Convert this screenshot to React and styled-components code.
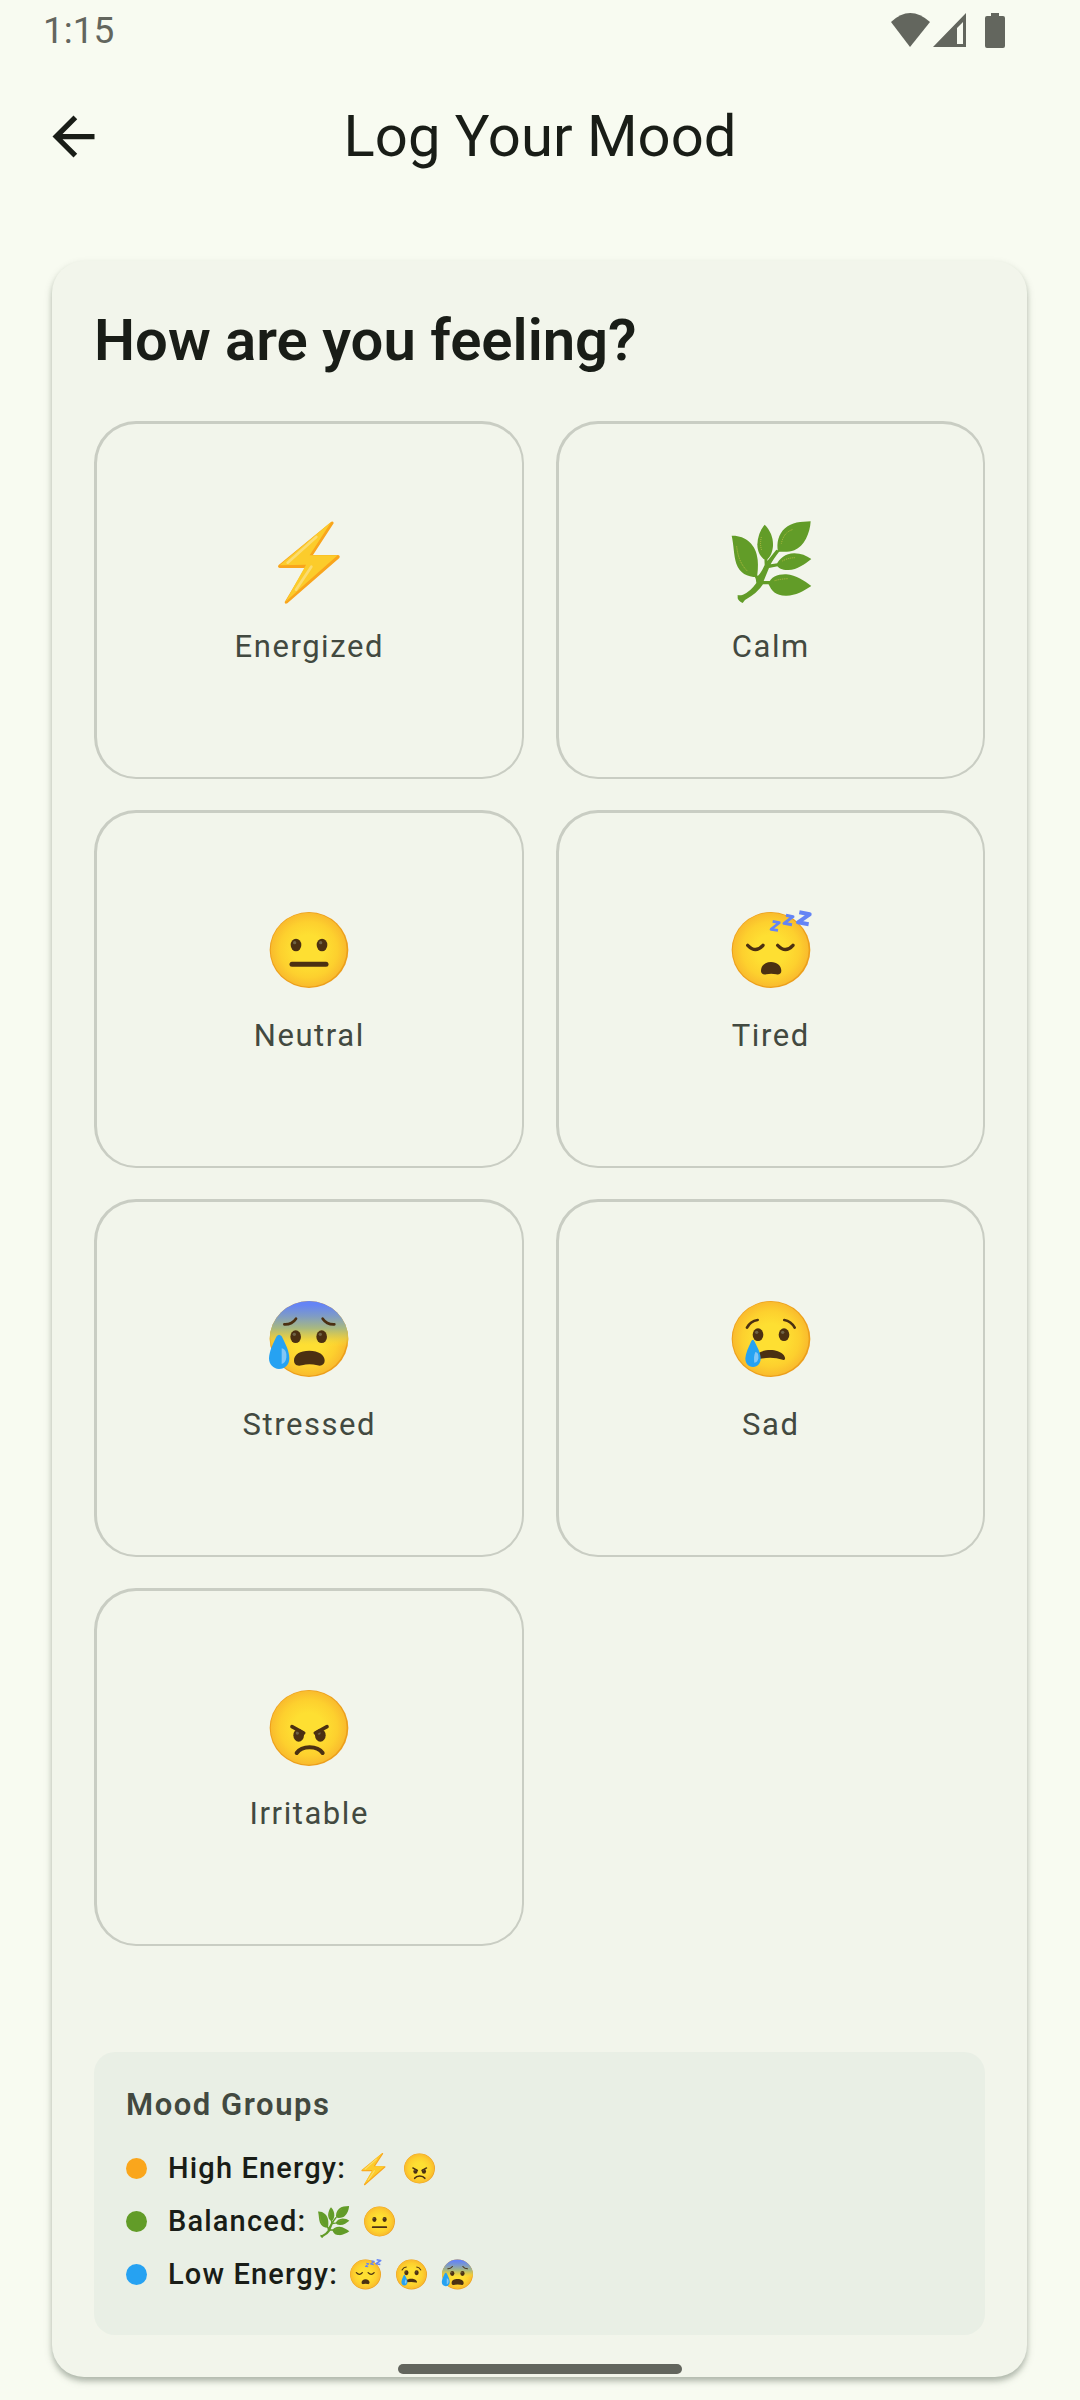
import React, { useState, useId } from 'react'
import styled, { createGlobalStyle } from 'styled-components'

const GlobalStyle = createGlobalStyle`
    * {
        box-sizing: border-box;
    }

    body {
        margin: 0;
        background: #f8fbf1;
        color: #191d17;
        font-family: Roboto, 'Liberation Sans', sans-serif;
    }
`

const BROWN = '#4b3012'

// round yellow head shared by all the faces
const Head = ({ cx, id, scared }) => (
    <>
        <defs>
            <radialGradient id={`${id}-head`} cx='50%' cy='50%' r='50%'>
                <stop offset='0.4' stopColor='#fedf32' />
                <stop offset='0.75' stopColor='#fdd02e' />
                <stop offset='1' stopColor='#f9bb2d' />
            </radialGradient>
            <linearGradient id={`${id}-blue`} x1='0' y1='0' x2='0' y2='1'>
                <stop offset='0.05' stopColor='#6584f5' />
                <stop offset='0.2' stopColor='#7f9cc4' />
                <stop offset='0.36' stopColor='#a9b97f' />
                <stop offset='0.48' stopColor='#dccb4e' stopOpacity='0.8' />
                <stop offset='0.6' stopColor='#fedf32' stopOpacity='0' />
            </linearGradient>
        </defs>
        <ellipse cx={cx} cy='204' rx='118' ry='114' fill='#ec9f1b' />
        <ellipse cx={cx - 1} cy='203' rx='114' ry='111' fill={`url(#${id}-head)`} />
        {scared && <ellipse cx={cx} cy='204' rx='118' ry='114' fill={`url(#${id}-blue)`} />}
    </>
)

const Eye = ({ cx, cy }) => (
    <>
        <ellipse cx={cx} cy={cy} rx='16' ry='19' fill={BROWN} />
        <ellipse cx={cx - 4} cy={cy - 7} rx='5' ry='5' fill='#6f6347' />
    </>
)

const Bolt = () => (
    <>
        <path d='M755 358Q762 355 762 363L700 458H774Q783 459 779 467L623 603Q615 607 615 599L676 497H600Q592 495 597 488Z' fill='#f9a51c' />
        <path d='M755 358L690 459H774L679 543L617 599L679 487L600 489Z' fill='#fccc2b' />
        <path d='M710 404L624 481M695 493L649 562' stroke='#fbdc70' strokeWidth='8' strokeLinecap='round' fill='none' />
    </>
)

const Herb = () => (
    <>
        <g fill='#629c28'>
            <path d='M574 160C612 158 648 184 652 232C654 252 652 270 650 284C620 284 598 272 588 244C580 220 580 184 574 160Z' />
            <path d='M673 127C690 144 699 166 698 190C697 208 690 224 680 231H671C659 222 651 206 651 186C652 162 660 142 673 127Z' />
            <path d='M811 117C809 152 792 192 762 204C746 210 728 208 713 208C708 182 714 156 734 138C754 120 782 118 811 117Z' />
            <path d='M813 230C792 246 772 262 744 263C728 264 714 258 708 248C718 228 734 214 762 213C782 213 798 220 813 230Z' />
            <path d='M813 311C790 326 764 341 736 340C706 339 694 326 684 304C692 284 712 275 738 276C768 278 792 296 813 311Z' />
            <path d='M592 338Q598 340 608 337Q630 328 648 302Q648 290 640 276L653 280Q662 272 673 248L672 224H682L681 236L708 202L718 206Q698 232 691 246L712 243V252L686 257L670 296H690V306H668Q652 332 614 353L607 362Q594 356 592 348Z' />
        </g>
        <path d='M589 192Q594 240 621 266M663 164Q658 186 664 204M756 142Q730 150 723 184M726 236Q744 226 766 226M703 295Q720 290 742 289' stroke='#b9bd42' strokeWidth='3' strokeDasharray='3 3' fill='none' />
    </>
)

const Neutral = ({ id }) => (
    <>
        <Head cx={209} id={id} />
        <Eye cx={170} cy={189} />
        <Eye cx={248} cy={189} />
        <path d='M158 247H260' stroke={BROWN} strokeWidth='15' strokeLinecap='round' />
    </>
)

const Sleepy = ({ id }) => (
    <>
        <Head cx={212} id={id} />
        <path d='M142 190Q166 215 188 190M232 190Q256 215 278 190' stroke={BROWN} strokeWidth='10' strokeLinecap='round' fill='none' />
        <path d='M182 267C182 250 195 240 212 240C230 240 243 252 243 266C243 275 236 279 228 277Q212 273 198 277C188 279 182 275 182 267Z' fill={BROWN} />
        <g fill='none' stroke='#6484f5' strokeLinejoin='round'>
            <path d='M217 118L237 122L212 142L233 145' strokeWidth='8' />
            <path d='M257 100L278 104L251 124L275 128' strokeWidth='9' />
            <path d='M297 91L328 97L293 121L325 127' strokeWidth='12' />
        </g>
    </>
)

const Anxious = ({ id }) => (
    <>
        <Head cx={209} id={id} scared />
        <path d='M135 160Q158 161 170 143M250 143Q262 161 285 160' stroke={BROWN} strokeWidth='8' strokeLinecap='round' fill='none' />
        <Eye cx={169} cy={197} />
        <Eye cx={247} cy={197} />
        <path d='M164 268C164 250 182 239 210 239C238 239 256 252 256 268C256 282 246 286 234 283Q210 276 188 283C174 287 164 282 164 268Z' fill={BROWN} />
        <path d='M112 196Q119 187 127 196C137 216 150 240 150 262C150 282 137 294 119 294C102 294 89 280 89 262C90 240 102 216 112 196Z' fill='#26a2f2' />
        <path d='M127 232C140 236 142 246 141 260C140 270 134 277 127 279Z' fill='#83c7f6' />
    </>
)

const Crying = ({ id }) => (
    <>
        <Head cx={212} id={id} />
        <path d='M140 170Q150 150 172 147M252 147Q272 150 283 170' stroke={BROWN} strokeWidth='8' strokeLinecap='round' fill='none' />
        <Eye cx={173} cy={191} />
        <Eye cx={251} cy={191} />
        <path d='M170 250C188 233 232 231 250 252C257 262 255 269 247 266Q214 256 178 264Z' fill={BROWN} />
        <path d='M152 212Q157 201 163 212C172 230 181 246 181 262C181 278 172 288 158 288C144 288 135 278 135 262C136 246 144 230 152 212Z' fill='#26a2f2' />
        <path d='M165 243C173 244 175 252 174 262C173 270 169 275 162 275C160 264 161 252 165 243Z' fill='#83c7f6' />
    </>
)

const Angry = ({ id }) => (
    <>
        <Head cx={209} id={id} />
        <Eye cx={178} cy={226} />
        <Eye cx={243} cy={226} />
        <path d='M158 200L193 219M263 200L228 219' stroke={BROWN} strokeWidth='11' strokeLinecap='round' />
        <path d='M172 279C188 256 234 256 250 279' stroke={BROWN} strokeWidth='12' strokeLinecap='round' fill='none' />
    </>
)

const EMOJI = {
    Energized: { Art: Bolt, box: '562 350 252 252' },
    Calm: { Art: Herb, box: '566 110 252 252' },
    Neutral: { Art: Neutral, box: '83 78 252 252' },
    Tired: { Art: Sleepy, box: '86 78 252 252' },
    Stressed: { Art: Anxious, box: '83 78 252 252' },
    Sad: { Art: Crying, box: '86 78 252 252' },
    Irritable: { Art: Angry, box: '83 78 252 252' },
}

const moods = ['Energized', 'Calm', 'Neutral', 'Tired', 'Stressed', 'Sad', 'Irritable']

const groups = [
    { name: 'High Energy', color: '#faa61c', moods: ['Energized', 'Irritable'] },
    { name: 'Balanced', color: '#629c28', moods: ['Calm', 'Neutral'] },
    { name: 'Low Energy', color: '#26a2f2', moods: ['Tired', 'Sad', 'Stressed'] },
]

const Emoji = ({ mood, size }) => {
    const id = useId()
    const { Art, box } = EMOJI[mood]
    return (
        <EmojiSvg $size={size} viewBox={box} aria-hidden='true'>
            <Art id={id} />
        </EmojiSvg>
    )
}

export default function App() {

    const [selected, setSelected] = useState('')

    return (
        <Page>
            <GlobalStyle />
            <StatusBar>
                <span>1:15</span>
                <StatusIcons viewBox='0 0 114 36' aria-hidden='true'>
                    <path d='M0 9Q19 -9 39 9L19 34Z' />
                    <path d='M42 34L75 0V34ZM66 31H72V9L66 15Z' fillRule='evenodd' />
                    <path d='M100 0H108V3H112Q114 3 114 5V33Q114 35 112 35H96Q94 35 94 33V5Q94 3 96 3H100Z' />
                </StatusIcons>
            </StatusBar>

            <Header>
                <BackButton type='button' aria-label='Back'>
                    <svg viewBox='0 0 24 24' aria-hidden='true'>
                        <path d='M20 11H7.83l5.59-5.59L12 4l-8 8 8 8 1.41-1.41L7.83 13H20v-2z' fill='currentColor' />
                    </svg>
                </BackButton>
                <Title>Log Your Mood</Title>
            </Header>

            <Card>
                <Question>How are you feeling?</Question>
                <MoodGrid>
                    {moods.map((mood) => (
                        <MoodButton
                            key={mood}
                            type='button'
                            aria-pressed={selected === mood}
                            onClick={() => setSelected(mood)}
                        >
                            <Emoji mood={mood} size={84} />
                            <span>{mood}</span>
                        </MoodButton>
                    ))}
                </MoodGrid>

                <Groups>
                    <GroupsTitle>Mood Groups</GroupsTitle>
                    <GroupList>
                        {groups.map((group) => (
                            <GroupRow key={group.name}>
                                <Dot $color={group.color} />
                                <span>{group.name}:</span>
                                <GroupEmojis>
                                    {group.moods.map((mood) => <Emoji key={mood} mood={mood} size={33} />)}
                                </GroupEmojis>
                            </GroupRow>
                        ))}
                    </GroupList>
                </Groups>
            </Card>
            <HomeBar />
        </Page>
    )
}

const Page = styled.div`
    display: flex;
    flex-direction: column;
    min-height: 100vh;
    padding-bottom: 23px;
`

const StatusBar = styled.div`
    display: flex;
    justify-content: space-between;
    align-items: center;
    height: 52px;
    padding: 10px 75px 0 43px;
    color: #63665e;
    font-size: 37px;
    line-height: 42px;
`

const StatusIcons = styled.svg`
    width: 114px;
    height: 36px;
    fill: #63665e;
`

const Header = styled.header`
    display: grid;
    grid-template-columns: 63px 1fr 63px;
    align-items: center;
    height: 168px;
    padding: 0 42px;
`

const BackButton = styled.button`
    display: flex;
    padding: 0;
    border: none;
    background: none;
    color: inherit;
    cursor: pointer;

    svg {
        width: 63px;
        height: 63px;
    }
`

const Title = styled.h1`
    margin: 0;
    font-size: 58px;
    font-weight: 400;
    line-height: 74px;
    text-align: center;
`

const Card = styled.main`
    margin: 41px 53px 0 52px;
    padding: 42px;
    border-radius: 32px;
    background: #f2f5eb;
    box-shadow: 0 4px 5px rgba(25, 40, 25, 0.22), 0 4px 10px rgba(25, 40, 25, 0.14);
`

const Question = styled.h2`
    margin: 0 0 44px;
    font-size: 58px;
    font-weight: 600;
    line-height: 74px;
`

const MoodGrid = styled.div`
    display: grid;
    grid-template-columns: 1fr 1fr;
    gap: 31px 32px;
`

const MoodButton = styled.button`
    display: flex;
    flex-direction: column;
    align-items: center;
    justify-content: center;
    gap: 23px;
    min-height: 358px;
    padding: 0 0 15px;
    border: solid ${(props) => (props['aria-pressed'] ? '#629c28' : '#c9cdc3')};
    border-width: 3px 2px 2px 3px;
    border-radius: 42px;
    background: transparent;
    color: #424940;
    font-family: inherit;
    font-size: 31px;
    letter-spacing: 0.05em;
    line-height: 42px;
    cursor: pointer;
`

const EmojiSvg = styled.svg`
    width: ${(props) => props.$size}px;
    height: ${(props) => props.$size}px;
    overflow: visible;
`

const Groups = styled.section`
    margin-top: 106px;
    padding: 32px 32px 40px;
    border-radius: 21px;
    background: #e9efe5;
`

const GroupsTitle = styled.h3`
    margin: 0 0 21px;
    color: #424940;
    font-size: 31px;
    font-weight: 600;
    letter-spacing: 0.05em;
    line-height: 42px;
`

const GroupList = styled.ul`
    display: flex;
    flex-direction: column;
    gap: 11px;
    margin: 0;
    padding: 0;
    list-style: none;
`

const GroupRow = styled.li`
    display: flex;
    align-items: center;
    font-size: 29px;
    font-weight: 500;
    letter-spacing: 0.04em;
    line-height: 42px;
`

const Dot = styled.i`
    width: 21px;
    height: 21px;
    margin-right: 21px;
    border-radius: 50%;
    background: ${(props) => props.$color};
`

const GroupEmojis = styled.div`
    display: flex;
    gap: 13px;
    margin-left: 11px;
`

// gesture handle, floats over the page
const HomeBar = styled.div`
    position: fixed;
    bottom: 26px;
    left: 50%;
    width: 284px;
    height: 10px;
    margin-left: -142px;
    border-radius: 5px;
    background: #62655d;
`
